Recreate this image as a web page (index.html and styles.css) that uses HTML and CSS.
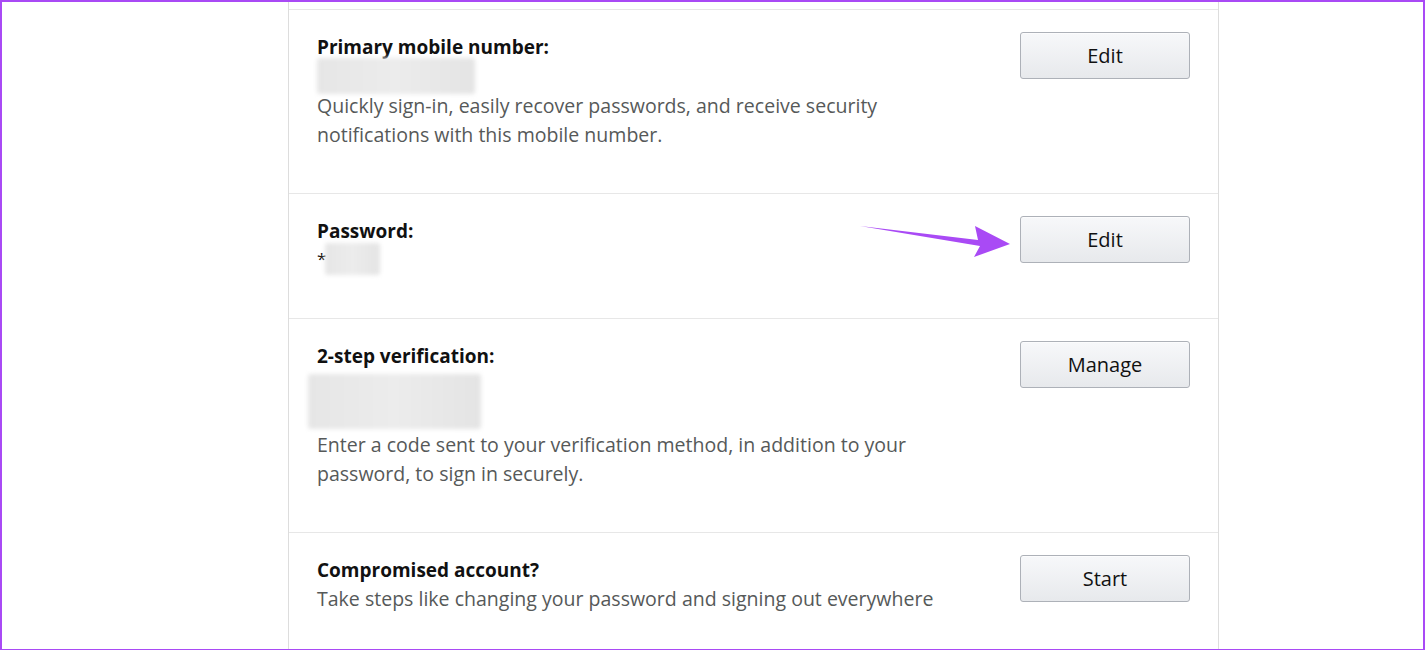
FILE: index.html
```html
<!DOCTYPE html>
<html>
<head>
<meta charset="utf-8">
<link rel="stylesheet" href="styles.css">
</head>
<body>
<div class="frame">
  <div class="card">
    <div class="top-spacer"></div>
    <section class="row">
      <div class="info">
        <h3 class="label">Primary mobile number:</h3>
        <div class="value"><span class="blur blur-phone"></span></div>
        <p class="desc">Quickly sign-in, easily recover passwords, and receive security notifications with this mobile number.</p>
      </div>
      <button class="btn">Edit</button>
    </section>
    <section class="row row-pw">
      <div class="info">
        <h3 class="label">Password:</h3>
        <div class="value value-pw">*<span class="blur blur-pw"></span></div>
      </div>
      <div class="btn-wrap">
        <svg class="arrow" width="160" height="40" viewBox="0 0 160 40" aria-hidden="true">
          <path d="M0 5 L118 19 L115 5 L150 23 L114 36 L120 25 Z" fill="#a94af5"/>
        </svg>
        <button class="btn">Edit</button>
      </div>
    </section>
    <section class="row row-2sv">
      <div class="info">
        <h3 class="label">2-step verification:</h3>
        <div class="value value-2sv"><span class="blur blur-2sv"></span></div>
        <p class="desc">Enter a code sent to your verification method, in addition to your password, to sign in securely.</p>
      </div>
      <button class="btn">Manage</button>
    </section>
    <section class="row row-last">
      <div class="info">
        <h3 class="label">Compromised account?</h3>
        <p class="desc desc-wide">Take steps like changing your password and signing out everywhere</p>
      </div>
      <button class="btn">Start</button>
    </section>
  </div>
</div>
</body>
</html>
```

FILE: styles.css
```css
html, body {
  margin: 0;
  padding: 0;
  background: #ffffff;
}
.frame {
  box-sizing: border-box;
  width: 1425px;
  height: 650px;
  border: 2px solid #a94af5;
  border-bottom-width: 1px;
  overflow: hidden;
  font-family: "Open Sans", "Noto Sans", sans-serif;
}
.card {
  margin-left: 286px;
  width: 931px;
  height: 100%;
  border-left: 1px solid #dddddd;
  border-right: 1px solid #dddddd;
  box-sizing: border-box;
}
.top-spacer {
  height: 7px;
}
.row {
  display: flex;
  justify-content: space-between;
  align-items: flex-start;
  border-top: 1px solid #e7e7e7;
  padding: 22px 28px 44px 28px;
}
.row-pw {
  padding-bottom: 45px;
}
.row-2sv {
  padding-bottom: 44px;
}
.row-last {
  padding-bottom: 30px;
}
.info {
  flex: 1;
  min-width: 0;
  padding-top: 1px;
}
.label {
  margin: 0;
  font-size: 19px;
  line-height: 28px;
  font-weight: 700;
  color: #111111;
}
.value {
  height: 30px;
  position: relative;
}
.value-pw {
  height: 28px;
  font-size: 17px;
  line-height: 28px;
  color: #111;
}
.value-2sv {
  height: 60px;
}
.blur {
  position: absolute;
  display: block;
  background: linear-gradient(90deg, #e6e6e6, #ececec 50%, #e4e4e4);
  filter: blur(2px);
  border-radius: 3px;
}
.blur-phone {
  left: 0;
  top: -3px;
  width: 158px;
  height: 36px;
}
.blur-pw {
  left: 8px;
  top: -2px;
  width: 55px;
  height: 32px;
}
.blur-2sv {
  left: -9px;
  top: 4px;
  width: 173px;
  height: 55px;
}
.desc {
  margin: 0;
  font-size: 19.55px;
  line-height: 29px;
  color: #565959;
  max-width: 610px;
}
.desc-wide {
  max-width: none;
}
.btn-wrap {
  position: relative;
}
.arrow {
  position: absolute;
  left: -160px;
  top: 5px;
}
.btn {
  width: 170px;
  height: 47px;
  border: 1px solid #adb1b8;
  border-radius: 3px;
  background: linear-gradient(#f7f8fa, #e7e9ec);
  font-family: "Open Sans", "Noto Sans", sans-serif;
  font-size: 20px;
  color: #111111;
  box-shadow: inset 0 1px 0 rgba(255,255,255,0.6);
  cursor: pointer;
  padding: 0;
}
```
